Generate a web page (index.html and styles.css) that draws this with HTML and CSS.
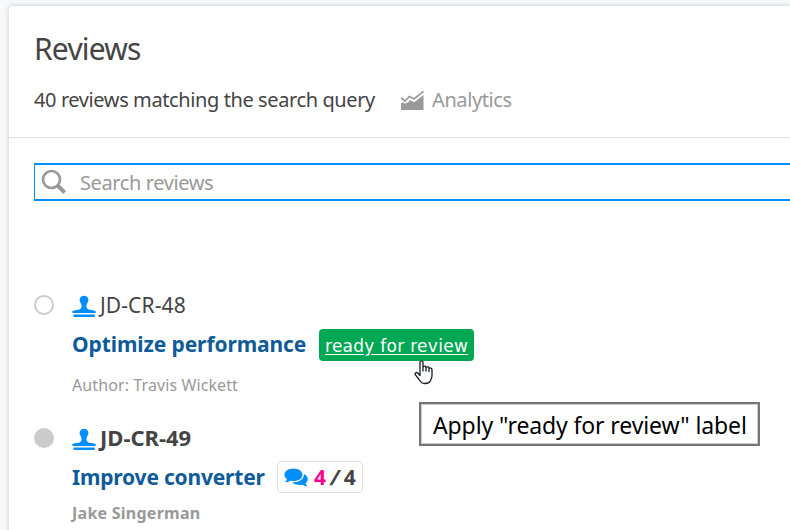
FILE: index.html
```html
<!DOCTYPE html>
<html lang="en">
<head>
<meta charset="utf-8">
<title>Reviews</title>
<link rel="stylesheet" href="styles.css">
</head>
<body>
<svg class="defs" width="0" height="0" aria-hidden="true">
  <symbol id="stamp" viewBox="0 0 24 23">
    <path d="M12 .8c2.600 0 4.400 1.700 4.400 4.100 0 2.200-2 3.700-2 6.200 0 1.800.6 2.700 2 3.300l5.600 1.100c1 .2 1.500.8 1.500 1.900H.5c0-1.100.500-1.700 1.500-1.900l5.600-1.100c1.400-.6 2-1.500 2-3.300 0-2.500-2-4-2-6.200C7.600 2.500 9.400.8 12 .8z"/>
    <path d="M.5 16h23v2.100H.5zM1.500 19.600h21.200v2.300H1.500z"/>
  </symbol>
</svg>
<main class="card">
  <header class="head">
    <h1>Reviews</h1>
    <div class="summary">
      <span class="count">40 reviews matching the search query</span>
      <a class="analytics">
        <svg class="chart" width="24" height="20" viewBox="0 0 24 20"><path fill="#999" d="M1 13.300 5.200 10.800 7.700 13 10 10 14.500 12 23.500 4.800V20H1z"/><path fill="none" stroke="#999" stroke-width="1.700" d="M1 7.800 5 11 9.300 6.600 14 9 23.500 1.300"/><path fill="none" stroke="#fff" stroke-width="1.200" d="M1 10.800 5 13 9.300 9 14 11.200 23.500 4"/></svg>
        <span class="analytics-text">Analytics</span>
      </a>
    </div>
  </header>
  <div class="search">
    <svg width="26" height="28" viewBox="0 0 26 28"><circle cx="10.500" cy="11.500" r="8.500" fill="none" stroke="#999" stroke-width="2.600"/><path d="m16.500 17.500 7.200 7" stroke="#999" stroke-width="4"/></svg>
    <span class="placeholder">Search reviews</span>
  </div>
  <section class="review">
    <i class="dot"></i>
    <div class="body">
      <div class="id-row"><svg class="stamp" width="24" height="23"><use href="#stamp"/></svg><span class="id">JD-CR-48</span></div>
      <div class="title-row"><a class="title t1">Optimize performance</a>
        <a class="label"><span class="label-text">ready for review</span>
          <svg class="hand" width="20" height="25" viewBox="0 0 20 25"><path fill="#fff" stroke="#1a1a2b" stroke-width="1.300" stroke-linejoin="round" stroke-linecap="round" d="M6 15.500V2.200C6 .3 9 .3 9 2.200V7.300C10 5.600 12 6 12 7.600 13 6.300 14.900 6.900 15 8.400 16 7.500 18 8 18 9.800V15.500C18 18 17 19 16.300 21 15.300 23 13 23.600 10.500 23.500 7.500 23.400 6.300 21.800 5 19.500L1.300 14.700C.4 13 2.500 11.700 4 13.200L6 15.500M9 7.300V11M12 7.600V11M15 8.400V11.500"/></svg>
          <span class="tooltip">Apply "ready for review" label</span>
        </a>
      </div>
      <div class="author a1">Author: Travis Wickett</div>
    </div>
  </section>
  <section class="review unread">
    <i class="dot"></i>
    <div class="body">
      <div class="id-row"><svg class="stamp" width="24" height="23"><use href="#stamp"/></svg><span class="id">JD-CR-49</span></div>
      <div class="title-row"><a class="title t2">Improve converter</a>
        <span class="comments">
          <svg width="25" height="20" viewBox="0 0 25 20"><path fill="#008eff" d="M9.500.5c5 0 9 2.800 9 6.300s-4 6.300-9 6.300c-1.200 0-2.200-.1-3.300-.4-1.500 1-3.400 1.600-5.200 1.600 1-1 1.700-2 1.900-3.200C1.400 10 .5 8.500.5 6.800.5 3.300 4.500.5 9.500.5z"/><path fill="#008eff" d="M20 6c2.300 1 3.800 2.900 3.800 5 0 1.800-.9 3.200-2.200 4.200.2 1.300 1 2.300 2.200 3.200-1.900 0-3.700-.6-5.200-1.700-4.200.9-8.400-.3-10.200-2.500C15 14.500 20 11.500 20 6z"/></svg>
          <span class="new">4</span><span class="slash">/</span><span>4</span>
        </span>
      </div>
      <div class="author a2">Jake Singerman</div>
    </div>
  </section>
</main>
</body>
</html>
```
FILE: styles.css
```css
* { box-sizing: border-box; }
body {
  margin: 0;
  height: 530px;
  overflow: hidden;
  padding: 6px 0 0 9px;
  background: #f7f9fa;
  font-family: "Noto Sans", "Open Sans", sans-serif;
  color: #444;
}
.defs { display: none; }
.card {
  height: 540px;
  background: #fff;
  border-radius: 4px 0 0 0;
  box-shadow: 0 0 5px rgba(50, 65, 85, .25);
}
.head {
  height: 132px;
  padding: 23px 0 0 25px;
  border-bottom: 1px solid #dfe1e5;
}
h1 { margin: 0; font-size: 30px; line-height: 40px; font-weight: 400; letter-spacing: -.8px; }
.summary { display: flex; align-items: center; height: 30px; margin-top: 16px; font-size: 20px; line-height: 30px; }
.count { width: 366px; letter-spacing: -.4px; white-space: nowrap; }
.analytics { display: flex; align-items: center; gap: 8px; color: #999; letter-spacing: -.4px; }
.search {
  display: flex;
  align-items: center;
  height: 38px;
  margin: 25px 0 0 25px;
  padding-left: 6px;
  gap: 13px;
  border: 2px solid #008eff;
  border-left-width: 1px;
  border-right: 0;
  font-size: 20px;
  letter-spacing: -.4px;
  color: #999;
}
.review { display: flex; height: 133px; padding-left: 25px; }
.search + .review { margin-top: 89px; }
.dot { width: 20px; height: 20px; margin: 5px 18px 0 0; border: 2px solid #ccc; border-radius: 50%; }
.unread .dot { background: #ccc; }
.id-row { display: flex; align-items: center; height: 30px; gap: 4px; font-size: 21px; line-height: 30px; }
.id { letter-spacing: .1px; }
.stamp { fill: #008eff; margin-top: 3px; }
.title-row { display: flex; align-items: center; height: 32px; margin-top: 9px; }
.title { font-size: 21px; line-height: 30px; padding-bottom: 2px; font-weight: 700; color: #0f5b99; white-space: nowrap; }
.t1 { width: 247px; letter-spacing: -.1px; }
.t2 { width: 205px; letter-spacing: -.2px; }
.label {
  position: relative;
  width: 155px;
  height: 32px;
  padding-left: 6px;
  border-radius: 4px;
  background: #00a854;
  color: #fff;
  font: 17px/34px "DejaVu Sans", sans-serif;
  white-space: nowrap;
}
.label-text { text-decoration: underline; text-underline-offset: 2px; letter-spacing: .27px; }
.hand { position: absolute; left: 94.5px; top: 31px; z-index: 2; }
.tooltip {
  position: absolute;
  left: 100px;
  top: 73px;
  width: 341px;
  height: 44px;
  padding-left: 12px;
  border: 2px solid #767676;
  box-shadow: inset 0 0 0 1px #ccc;
  background: #fff;
  color: #000;
  font: 23px/42px "Noto Sans", sans-serif;
  letter-spacing: -.12px;
}
.author { margin-top: 12px; font-size: 16px; line-height: 24px; letter-spacing: .1px; color: #999; white-space: nowrap; }
.unread .id, .unread .author { font-weight: 700; }
.unread .id { font-size: 22px; line-height: 28px; padding-bottom: 2px; letter-spacing: 0; }
.unread .author { margin-top: 7px; letter-spacing: .25px; }
.comments {
  display: flex;
  align-items: center;
  width: 86px;
  height: 32px;
  margin-top: -3px;
  padding: 0 0 0 6px;
  border: 1px solid #dfe1e8;
  border-radius: 4px;
  font-size: 21px;
  line-height: 30px;
  font-weight: 700;
}
.comments svg { margin: 2px 5px 0 0; }
.new { color: #ff008c; }
.slash { margin: 0 4px 0 5px; transform: skewX(-12deg); }
```
